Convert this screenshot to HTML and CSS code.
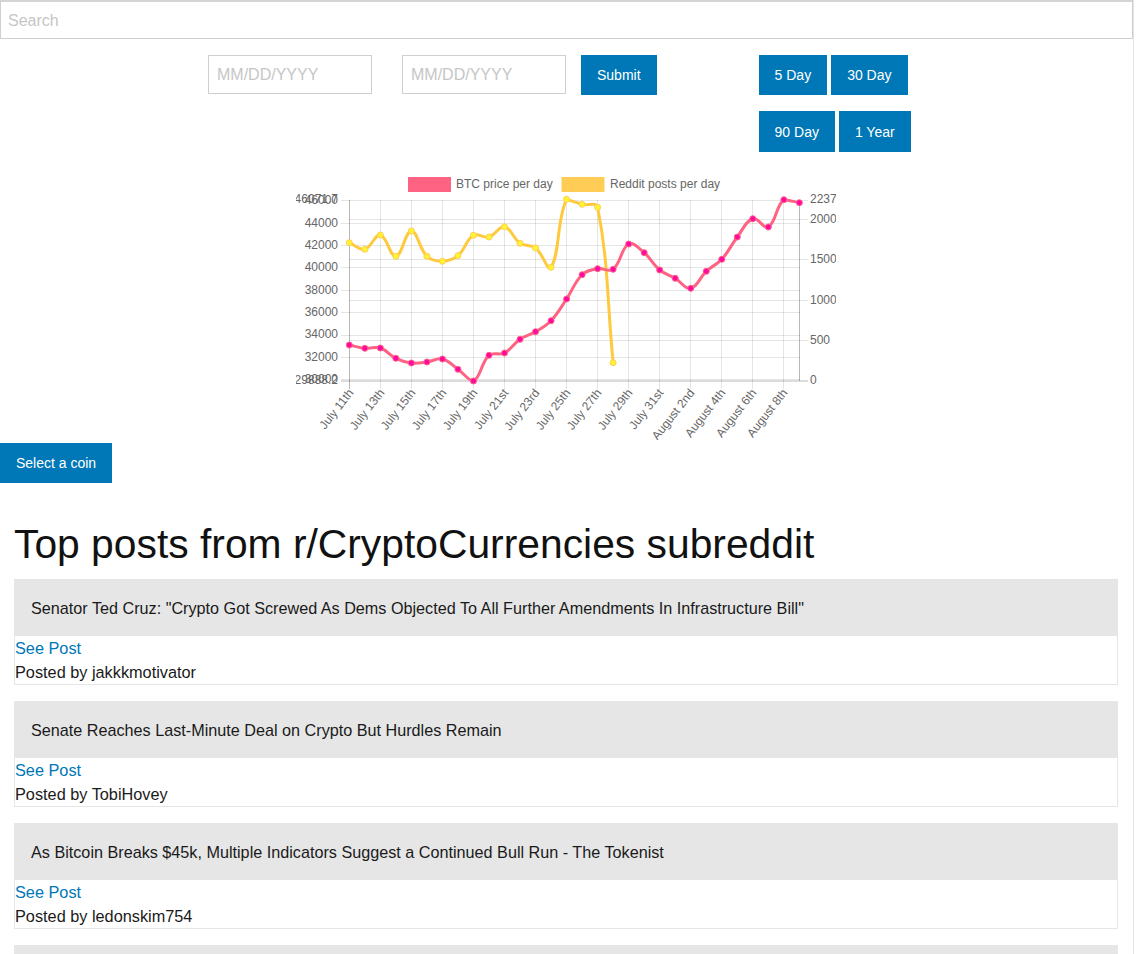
FILE: index.html
```html
<!DOCTYPE html>
<html lang="en">
<head>
<meta charset="utf-8">
<title>Crypto Tracker</title>
<link rel="stylesheet" href="styles.css">
</head>
<body>
<div class="page">
  <input class="search" type="text" placeholder="Search">

  <div class="controls">
    <form class="date-form">
      <input class="date-input date-start" type="text" placeholder="MM/DD/YYYY">
      <input class="date-input date-end" type="text" placeholder="MM/DD/YYYY">
      <button class="btn btn-submit" type="button">Submit</button>
    </form>
    <div class="ranges">
      <div class="range-row">
        <button class="btn" type="button">5 Day</button>
        <button class="btn" type="button">30 Day</button>
      </div>
      <div class="range-row range-row-tall">
        <button class="btn" type="button">90 Day</button>
        <button class="btn" type="button">1 Year</button>
      </div>
    </div>
  </div>

  <div class="chart-wrap">
    <svg id="chart" class="chart" width="540" height="270" viewBox="296 170 540 270" xmlns="http://www.w3.org/2000/svg">
      <!-- legend -->
      <g class="legend">
        <rect x="409.5" y="178.5" width="40" height="12" fill="#ff6384" stroke="#ff6384" stroke-width="3"/>
        <text x="456" y="184.5">BTC price per day</text>
        <rect x="563" y="178.5" width="40" height="12" fill="#ffcd56" stroke="#ffcd56" stroke-width="3"/>
        <text x="610" y="184.5">Reddit posts per day</text>
      </g>

      <!-- horizontal grid (left axis) -->
      <g class="grid">
        <line x1="341" y1="200.5" x2="800" y2="200.5"/>
        <line x1="341" y1="223.5" x2="800" y2="223.5"/>
        <line x1="341" y1="245.5" x2="800" y2="245.5"/>
        <line x1="341" y1="267.5" x2="800" y2="267.5"/>
        <line x1="341" y1="290.5" x2="800" y2="290.5"/>
        <line x1="341" y1="312.5" x2="800" y2="312.5"/>
        <line x1="341" y1="335.5" x2="800" y2="335.5"/>
        <line x1="341" y1="357.5" x2="800" y2="357.5"/>
        <line x1="341" y1="379.5" x2="800" y2="379.5"/>
        <!-- right axis -->
        <line x1="349" y1="219.5" x2="808" y2="219.5"/>
        <line x1="349" y1="259.5" x2="808" y2="259.5"/>
        <line x1="349" y1="300.5" x2="808" y2="300.5"/>
        <line x1="349" y1="340.5" x2="808" y2="340.5"/>
        <line x1="800" y1="200.5" x2="808" y2="200.5"/>
        <!-- vertical grid -->
        <line x1="380.5" y1="200" x2="380.5" y2="389"/>
        <line x1="411.5" y1="200" x2="411.5" y2="389"/>
        <line x1="442.5" y1="200" x2="442.5" y2="389"/>
        <line x1="473.5" y1="200" x2="473.5" y2="389"/>
        <line x1="504.5" y1="200" x2="504.5" y2="389"/>
        <line x1="535.5" y1="200" x2="535.5" y2="389"/>
        <line x1="566.5" y1="200" x2="566.5" y2="389"/>
        <line x1="597.5" y1="200" x2="597.5" y2="389"/>
        <line x1="628.5" y1="200" x2="628.5" y2="389"/>
        <line x1="659.5" y1="200" x2="659.5" y2="389"/>
        <line x1="690.5" y1="200" x2="690.5" y2="389"/>
        <line x1="721.5" y1="200" x2="721.5" y2="389"/>
        <line x1="752.5" y1="200" x2="752.5" y2="389"/>
        <line x1="783.5" y1="200" x2="783.5" y2="389"/>
      </g>
      <g class="axis">
        <line x1="349.5" y1="200" x2="349.5" y2="389"/>
        <line x1="799.5" y1="200" x2="799.5" y2="381"/>
        <line x1="341" y1="381" x2="808" y2="381"/>
      </g>

      <!-- left axis labels -->
      <g class="ylabels-left">
        <text x="338" y="200">46071.7</text>
        <text x="338" y="201">46000</text>
        <text x="338" y="223.5">44000</text>
        <text x="338" y="245.5">42000</text>
        <text x="338" y="268">40000</text>
        <text x="338" y="290.5">38000</text>
        <text x="338" y="312.5">36000</text>
        <text x="338" y="335">34000</text>
        <text x="338" y="357.5">32000</text>
        <text x="338" y="379.5">30000</text>
        <text x="338" y="381">29888.2</text>
      </g>
      <!-- right axis labels -->
      <g class="ylabels-right">
        <text x="810" y="200">2237</text>
        <text x="810" y="219.5">2000</text>
        <text x="810" y="259.5">1500</text>
        <text x="810" y="300.5">1000</text>
        <text x="810" y="340.5">500</text>
        <text x="810" y="381">0</text>
      </g>
      <!-- x labels -->
      <g class="xlabels">
        <text transform="translate(351.5 391) rotate(-52)">July 11th</text>
        <text transform="translate(382.5 391) rotate(-52)">July 13th</text>
        <text transform="translate(413.5 391) rotate(-52)">July 15th</text>
        <text transform="translate(444.5 391) rotate(-52)">July 17th</text>
        <text transform="translate(475.5 391) rotate(-52)">July 19th</text>
        <text transform="translate(506.5 391) rotate(-52)">July 21st</text>
        <text transform="translate(537.5 391) rotate(-52)">July 23rd</text>
        <text transform="translate(568.5 391) rotate(-52)">July 25th</text>
        <text transform="translate(599.5 391) rotate(-52)">July 27th</text>
        <text transform="translate(630.5 391) rotate(-52)">July 29th</text>
        <text transform="translate(661.5 391) rotate(-52)">July 31st</text>
        <text transform="translate(692.5 391) rotate(-52)">August 2nd</text>
        <text transform="translate(723.5 391) rotate(-52)">August 4th</text>
        <text transform="translate(754.5 391) rotate(-52)">August 6th</text>
        <text transform="translate(785.5 391) rotate(-52)">August 8th</text>
      </g>

      <g id="reddit-series" class="series-reddit"></g>
      <g id="btc-series" class="series-btc"></g>
    </svg>
  </div>

  <button class="btn btn-coin" type="button">Select a coin</button>

  <h1 class="posts-heading">Top posts from r/CryptoCurrencies subreddit</h1>

  <div class="posts">
    <div class="post">
      <div class="post-title">Senator Ted Cruz: "Crypto Got Screwed As Dems Objected To All Further Amendments In Infrastructure Bill"</div>
      <div class="post-body">
        <a class="post-link" href="#">See Post</a>
        <div class="post-author">Posted by jakkkmotivator</div>
      </div>
    </div>
    <div class="post">
      <div class="post-title">Senate Reaches Last-Minute Deal on Crypto But Hurdles Remain</div>
      <div class="post-body">
        <a class="post-link" href="#">See Post</a>
        <div class="post-author">Posted by TobiHovey</div>
      </div>
    </div>
    <div class="post">
      <div class="post-title">As Bitcoin Breaks $45k, Multiple Indicators Suggest a Continued Bull Run - The Tokenist</div>
      <div class="post-body">
        <a class="post-link" href="#">See Post</a>
        <div class="post-author">Posted by ledonskim754</div>
      </div>
    </div>
    <div class="post">
      <div class="post-title">Bitcoin tops $46,000 as crypto market rallies</div>
      <div class="post-body">
        <a class="post-link" href="#">See Post</a>
        <div class="post-author">Posted by cryptonews</div>
      </div>
    </div>
  </div>
</div>
<script src="script.js"></script>
</body>
</html>
```

FILE: styles.css
```css
* {
  box-sizing: border-box;
}

html {
  overflow: hidden;
}

body {
  margin: 0;
  background: #fff;
  color: #1a1a1a;
  font-family: "Liberation Sans", Arial, Helvetica, sans-serif;
}

.page {
  width: 1134px;
  min-height: 954px;
  border-right: 1px solid #e3e3e3;
}

.search {
  display: block;
  width: 100%;
  height: 39px;
  margin: 0;
  padding: 1px 7px 0;
  border: 1px solid #cfcfcf;
  border-top: 2px solid #d4d4d4;
  font-family: inherit;
  font-size: 16px;
  color: #333;
  outline: none;
}

.search::placeholder,
.date-input::placeholder {
  color: #c6c6c6;
}

.controls {
  display: flex;
  align-items: flex-start;
  margin-top: 16px;
  padding-left: 208px;
}

.date-form {
  display: flex;
  align-items: flex-start;
  margin: 0;
}

.date-input {
  width: 164px;
  height: 39px;
  margin: 0;
  padding: 1px 8px 0;
  border: 1px solid #cfcfcf;
  font-family: inherit;
  font-size: 16px;
  outline: none;
}

.date-start {
  margin-right: 30px;
}

.date-end {
  margin-right: 15px;
}

.btn {
  height: 40px;
  margin: 0;
  padding: 0 16px;
  border: 0;
  border-radius: 0;
  background: #0077b6;
  color: #fff;
  font-family: inherit;
  font-size: 14px;
  cursor: pointer;
}

.ranges {
  display: flex;
  flex-direction: column;
  gap: 16px;
  margin-left: 102px;
}

.range-row {
  display: flex;
  gap: 4px;
}

.range-row-tall .btn {
  height: 41px;
}

.chart-wrap {
  margin-top: 18px;
  padding-left: 296px;
}

.chart {
  display: block;
  font-family: "Liberation Sans", Arial, Helvetica, sans-serif;
  font-size: 12px;
}

.chart text {
  fill: #666;
}

.legend text {
  dominant-baseline: middle;
}

.grid line {
  stroke: rgba(0, 0, 0, 0.1);
  stroke-width: 1;
}

.axis line {
  stroke: rgba(0, 0, 0, 0.28);
  stroke-width: 1;
}

.ylabels-left text {
  text-anchor: end;
  dominant-baseline: middle;
}

.ylabels-right text {
  text-anchor: start;
  dominant-baseline: middle;
}

.xlabels text {
  text-anchor: end;
  dominant-baseline: middle;
}

.series-btc path {
  fill: none;
  stroke: #ff6384;
  stroke-width: 3;
}

.series-btc circle {
  fill: #ff0aa0;
  stroke: #ff6384;
  stroke-width: 1;
}

.series-reddit path {
  fill: none;
  stroke: #ffc93e;
  stroke-width: 3;
}

.series-reddit circle {
  fill: #fff533;
  stroke: #ffcd56;
  stroke-width: 1;
}

.btn-coin {
  display: block;
  margin-top: 3px;
}

.posts-heading {
  margin: 38px 14px 12px;
  font-size: 40.8px;
  line-height: 46px;
  font-weight: 400;
  color: #111;
}

.post {
  margin: 0 15px 16px 14px;
  border: 1px solid #e6e6e6;
}

.post-title {
  padding: 16px;
  background: #e6e6e6;
  font-size: 16.2px;
  line-height: 24px;
  color: #1a1a1a;
}

.post-body {
  font-size: 16.3px;
  line-height: 24px;
}

.post-link {
  display: block;
  color: #0077b6;
  text-decoration: none;
}

.post-author {
  color: #1a1a1a;
}
```

FILE: script.js
```js
(function () {
  var NS = 'http://www.w3.org/2000/svg';
  var x0 = 349.3;
  var step = 15.52;
  var top = 200;
  var bottom = 381;

  var btc = [345, 348.3, 348, 358.3, 363, 362, 359, 369.3, 381, 355.3, 353, 339.3, 331.7, 320.7, 299,
    274.7, 268.7, 269.3, 244, 252.7, 270, 278.3, 288.3, 271.3, 259.3, 237, 218.7, 227, 199.7, 202.7];
  var posts = [242.7, 249.3, 235, 256.3, 231, 256.3, 261.3, 255.7, 235.3, 237, 226.7, 243.3, 248,
    267.3, 199.3, 204.3, 207.3, 362.7];

  function toPoints(ys) {
    return ys.map(function (y, i) { return [x0 + i * step, y]; });
  }

  function clamp(v) {
    return Math.max(top, Math.min(bottom, v));
  }

  function splinePath(pts, t) {
    var cps = pts.map(function (p, i) {
      var prev = pts[i - 1] || p;
      var next = pts[i + 1] || p;
      var d01 = Math.hypot(p[0] - prev[0], p[1] - prev[1]);
      var d12 = Math.hypot(next[0] - p[0], next[1] - p[1]);
      var sum = d01 + d12;
      var s01 = sum ? d01 / sum : 0;
      var s12 = sum ? d12 / sum : 0;
      var fa = t * s01;
      var fb = t * s12;
      return {
        a: [p[0] - fa * (next[0] - prev[0]), clamp(p[1] - fa * (next[1] - prev[1]))],
        b: [p[0] + fb * (next[0] - prev[0]), clamp(p[1] + fb * (next[1] - prev[1]))]
      };
    });
    var d = 'M' + pts[0][0].toFixed(2) + ',' + pts[0][1].toFixed(2);
    for (var i = 1; i < pts.length; i++) {
      var c1 = cps[i - 1].b;
      var c2 = cps[i].a;
      d += ' C' + c1[0].toFixed(2) + ',' + c1[1].toFixed(2) + ' ' +
        c2[0].toFixed(2) + ',' + c2[1].toFixed(2) + ' ' +
        pts[i][0].toFixed(2) + ',' + pts[i][1].toFixed(2);
    }
    return d;
  }

  function draw(groupId, ys) {
    var g = document.getElementById(groupId);
    if (!g) return;
    var pts = toPoints(ys);
    var path = document.createElementNS(NS, 'path');
    path.setAttribute('d', splinePath(pts, 0.4));
    g.appendChild(path);
    pts.forEach(function (p) {
      var c = document.createElementNS(NS, 'circle');
      c.setAttribute('cx', p[0].toFixed(2));
      c.setAttribute('cy', p[1].toFixed(2));
      c.setAttribute('r', '3');
      g.appendChild(c);
    });
  }

  draw('reddit-series', posts);
  draw('btc-series', btc);
})();
```
